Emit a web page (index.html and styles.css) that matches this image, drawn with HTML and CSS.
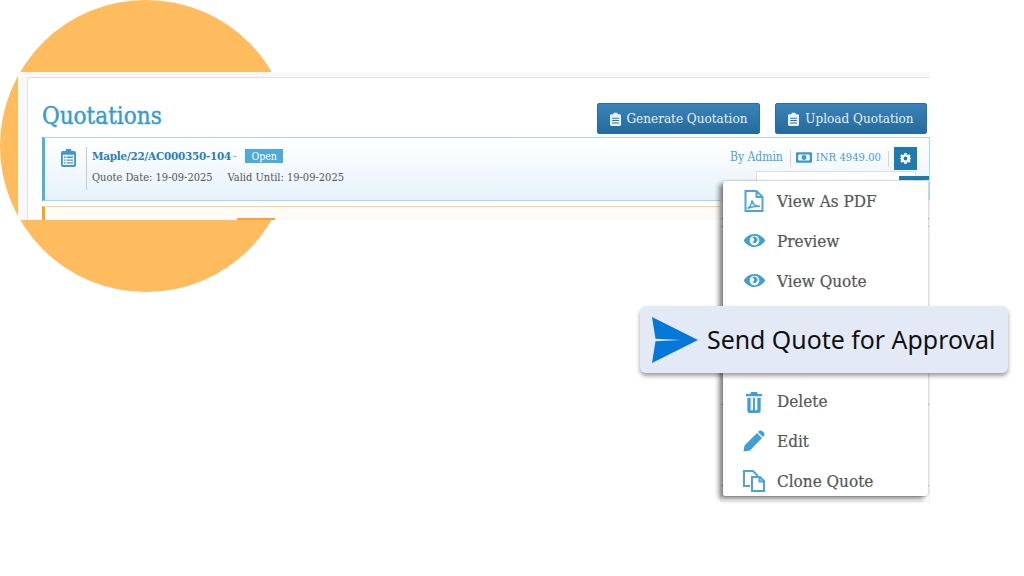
FILE: index.html
```html
<!DOCTYPE html>
<html lang="en">
<head>
  <meta charset="UTF-8">
  <meta name="viewport" content="width=device-width, initial-scale=1.0">
  <title>Quotations</title>
  <link rel="stylesheet" href="styles.css">
</head>
<body>
  <div class="canvas">
    <div class="circle"></div>

    <div class="sheet">
      <div class="panel">
        <div class="panel-head">
          <h1>Quotations</h1>
          <div class="head-actions">
            <button class="btn btn-generate">
              <svg class="btn-icon" viewBox="0 0 16 20"><path fill="#e8f1f8" fill-rule="evenodd" d="M2 3h3V2a1 1 0 0 1 1-1h4a1 1 0 0 1 1 1v1h3a2 2 0 0 1 2 2v13a2 2 0 0 1-2 2H2a2 2 0 0 1-2-2V5a2 2 0 0 1 2-2zm1 5v1.500h10V8zm0 3.500V13h10v-1.500zM3 15v1.500h10V15z"/></svg>
              Generate Quotation
            </button>
            <button class="btn btn-upload">
              <svg class="btn-icon" viewBox="0 0 16 20"><path fill="#e8f1f8" fill-rule="evenodd" d="M2 3h3V2a1 1 0 0 1 1-1h4a1 1 0 0 1 1 1v1h3a2 2 0 0 1 2 2v13a2 2 0 0 1-2 2H2a2 2 0 0 1-2-2V5a2 2 0 0 1 2-2zm1 5v1.500h10V8zm0 3.500V13h10v-1.500zM3 15v1.500h10V15z"/></svg>
              Upload Quotation
            </button>
          </div>
        </div>

        <div class="quote quote-open">
          <div class="quote-icon">
            <svg viewBox="0 0 16 20"><path fill="#3f97cc" fill-rule="evenodd" d="M2 3h3V2a1 1 0 0 1 1-1h4a1 1 0 0 1 1 1v1h3a2 2 0 0 1 2 2v13a2 2 0 0 1-2 2H2a2 2 0 0 1-2-2V5a2 2 0 0 1 2-2zm0 4v11h12V7zm1.200 2h1.600v1.400H3.200zm2.800 0h6.800v1.400H6zm-2.800 3h1.600v1.400H3.200zm2.800 0h6.800v1.400H6zm-2.800 3h1.600v1.400H3.200zm2.800 0h6.800v1.400H6z"/></svg>
          </div>
          <div class="quote-body">
            <div class="quote-title"><a>Maple/22/AC000350-104</a> <span class="dash">-</span> <span class="badge">Open</span></div>
            <div class="quote-dates"><span>Quote Date: 19-09-2025</span><span>Valid Until: 19-09-2025</span></div>
          </div>
          <div class="quote-meta">
            <span class="by">By Admin</span>
            <span class="amount">
              <svg viewBox="0 0 18 12"><path fill="#3f97cc" fill-rule="evenodd" d="M1 0h16a1 1 0 0 1 1 1v10a1 1 0 0 1-1 1H1a1 1 0 0 1-1-1V1a1 1 0 0 1 1-1zm2.500 2.500L2.500 3.500v5l1 1h11l1-1v-5l-1-1zM9 3.200a2.800 2.800 0 1 1 0 5.600 2.800 2.800 0 0 1 0-5.600z"/></svg>
              INR 4949.00
            </span>
            <span class="gear-btn">
              <svg viewBox="0 0 24 24"><path fill="#fff" fill-rule="evenodd" d="M10 2h4l.6 2.900 1.700.7 2.500-1.600 2.800 2.800-1.600 2.500.7 1.700L23.500 12l-2.800.9-.7 1.700 1.600 2.500-2.800 2.800-2.500-1.600-1.700.7L14 22h-4l-.6-2.900-1.700-.7-2.500 1.600-2.800-2.800 1.600-2.500-.7-1.700L.5 12l2.800-.9.7-1.700-1.600-2.500 2.800-2.800 2.500 1.600 1.700-.7zm2 6.500a3.500 3.500 0 1 0 0 7 3.500 3.500 0 0 0 0-7z"/></svg>
            </span>
          </div>
        </div>

        <div class="quote quote-pending">
          <span class="badge-orange"></span>
        </div>
      </div>
    </div>

    <div class="menu-back"></div>
    <div class="peek"></div>
    <div class="peek-bar"></div>

    <ul class="menu">
      <li>
        <svg class="icon-pdf" viewBox="0 0 20 22"><path fill="none" stroke="#4aa6d8" stroke-width="2" d="M1.500 1h11l6 6v14h-17zM12.500 1v6h6"/><path fill="none" stroke="#4aa6d8" stroke-width="1.500" d="M3.500 18.500c2.500-1.500 4-4.500 4.500-8 .8 3.500 3 5.800 8 5.800-4 0-8.500.2-12.500 2.200z"/></svg>
        View As PDF
      </li>
      <li>
        <svg class="icon-eye" viewBox="0 0 24 16"><path fill="#3f9fd6" fill-rule="evenodd" d="M12 1c5.500 0 9.500 3.500 11.500 7-2 3.500-6 7-11.500 7S2.500 11.500.500 8C2.500 4.500 6.500 1 12 1zm0 1.800a5.200 5.200 0 1 0 0 10.400 5.200 5.200 0 0 0 0-10.400zM9.500 5a3.300 3.300 0 1 1 0 4.600A2 2 0 0 0 9.500 5z"/></svg>
        Preview
      </li>
      <li>
        <svg class="icon-eye" viewBox="0 0 24 16"><path fill="#3f9fd6" fill-rule="evenodd" d="M12 1c5.500 0 9.500 3.500 11.500 7-2 3.500-6 7-11.500 7S2.500 11.500.500 8C2.500 4.500 6.500 1 12 1zm0 1.800a5.200 5.200 0 1 0 0 10.400 5.200 5.200 0 0 0 0-10.400zM9.500 5a3.300 3.300 0 1 1 0 4.600A2 2 0 0 0 9.500 5z"/></svg>
        View Quote
      </li>
      <li class="gap"></li>
      <li>
        <svg class="icon-trash" viewBox="0 0 18 22"><path fill="#3f9fd6" fill-rule="evenodd" d="M6 0h6l1 2h4.500v2.500H.500V2H5zM2 6h14v13a3 3 0 0 1-3 3H5a3 3 0 0 1-3-3zm3.500 0v13H8V6zm4.500 0v13h2.500V6z"/></svg>
        Delete
      </li>
      <li>
        <svg class="icon-edit" viewBox="0 0 22 22"><path fill="#3f9fd6" d="M14 3l5 5L7 20.500.500 21.500 1.500 15.500zM15.500 1.500a3 3 0 0 1 4.200 0l.8.800a3 3 0 0 1 0 4.200l-.5.500-5-5z"/></svg>
        Edit
      </li>
      <li>
        <svg class="icon-clone" viewBox="0 0 22 22"><path fill="none" stroke="#4aa6d8" stroke-width="2" d="M7 16H1V1h9l4 4v2M9 7h8l4 4v10H9zM16.500 7v4.500H21"/></svg>
        Clone Quote
      </li>
    </ul>

    <div class="callout">
      <svg viewBox="0 0 48 48"><path fill="#0477d8" d="M1 1l46 23L1 47l3.500-21.800L30 24 4.500 22.800z"/></svg>
      <span>Send Quote for Approval</span>
    </div>
  </div>
</body>
</html>
```

FILE: styles.css
```css
html, body {
  margin: 0;
  padding: 0;
  background: #fff;
}
.canvas {
  position: relative;
  width: 1024px;
  height: 576px;
  overflow: hidden;
  font-family: "DejaVu Serif Condensed", "DejaVu Serif", serif;
}
.circle {
  position: absolute;
  left: 0;
  top: 0;
  width: 292px;
  height: 292px;
  border-radius: 50%;
  background: #ffbc5e;
}
.sheet {
  position: absolute;
  left: 18px;
  top: 72px;
  width: 912px;
  height: 148px;
  overflow: hidden;
  background: #f8f8f8;
  padding: 5px 0 0 9px;
  box-sizing: border-box;
}
.panel {
  height: 100%;
  background: #fff;
  border-top: 1px solid #e2e2e2;
  border-left: 1px solid #e2e2e2;
  padding: 0 0 0 14px;
}
.panel-head {
  display: flex;
  justify-content: space-between;
  align-items: flex-end;
  box-sizing: border-box;
  height: 59px;
  padding: 0 3px 3px 0;
}
h1 {
  margin: 0 0 4px;
  font-size: 24px;
  font-weight: 400;
  -webkit-text-stroke: 0.4px #359ccf;
  color: #359ccf;
}
.head-actions {
  display: flex;
  gap: 15px;
}
.btn {
  display: flex;
  align-items: center;
  justify-content: center;
  gap: 6px;
  height: 31px;
  padding: 0;
  border: 1px solid #2a6ea0;
  border-radius: 2px;
  background: linear-gradient(#3a83b8, #256a9e);
  color: #e8f1f8;
  font-family: inherit;
  font-size: 13.400px;
}
.btn-generate {
  width: 163px;
}
.btn-upload {
  width: 152px;
}
.btn-icon {
  width: 11px;
  height: 14px;
}
.quote {
  display: flex;
  box-sizing: border-box;
  background: linear-gradient(#fff, #e6f2fb);
  border: 1px solid #a5d8f2;
  border-left: 3px solid #4fb0e0;
  height: 64px;
}
.quote-icon {
  display: flex;
  justify-content: center;
  box-sizing: border-box;
  width: 42px;
  height: 43px;
  margin-top: 9px;
  padding-left: 6px;
  border-right: 1px solid #c9c9c9;
  flex-shrink: 0;
}
.quote-icon svg {
  width: 15px;
  height: 19px;
  margin-top: 1px;
}
.quote-body {
  flex: 1;
  padding: 10px 0 0 5px;
}
.quote-title {
  display: flex;
  align-items: center;
  height: 16px;
  font-size: 11.600px;
  font-weight: 700;
  letter-spacing: -0.25px;
  color: #2b7fb3;
}
.dash {
  margin: 0 9px 0 2px;
  font-weight: 400;
  color: #4aa6d8;
}
.badge {
  padding: 0 6px;
  height: 14px;
  line-height: 14px;
  letter-spacing: 0;
  background: #4fa9dc;
  color: #fff;
  font-size: 10.500px;
  font-weight: 400;
}
.quote-dates {
  display: flex;
  gap: 15px;
  margin-top: 7px;
  font-size: 11px;
  color: #555;
}
.quote-meta {
  display: flex;
  align-items: center;
  align-self: flex-start;
  margin: 9px 12px 0 0;
  font-size: 11.200px;
  color: #4a9fd0;
}
.by {
  padding: 0 7px 3px 0;
  font-size: 12px;
  border-right: 1px solid #d5d5d5;
}
.amount {
  display: flex;
  align-items: center;
  gap: 4px;
  padding: 0 7px 3px 5px;
  border-right: 1px solid #d5d5d5;
}
.amount svg {
  width: 16px;
  height: 11px;
}
.gear-btn {
  display: flex;
  align-items: center;
  justify-content: center;
  width: 23px;
  height: 23px;
  margin-left: 5px;
  background: #1f7aad;
}
.gear-btn svg {
  width: 13px;
  height: 13px;
}
.quote-pending {
  display: block;
  position: relative;
  margin-top: 5px;
  background: #fffcf7;
  border: 1px solid #ffd197;
  border-left: 3px solid #f5a623;
}
.badge-orange {
  position: absolute;
  left: 192px;
  top: 11px;
  width: 38px;
  height: 14px;
  background: #f5a33a;
}
.menu-back {
  position: absolute;
  left: 720px;
  top: 200px;
  width: 210px;
  height: 302px;
  box-sizing: border-box;
  border: 1px solid #f0f0f0;
  background-color: #fff;
  background-repeat: no-repeat;
  background-size: 100% 1px;
  background-image:
    linear-gradient(#8ccbec, #8ccbec),
    linear-gradient(#f7b767, #f7b767),
    linear-gradient(#f7b767, #f7b767),
    linear-gradient(#f7b767, #f7b767);
  background-position: 0 17px, 0 25px, 0 203px, 0 284px;
}
.peek {
  position: absolute;
  left: 756px;
  top: 171px;
  width: 160px;
  height: 12px;
  background: #fff;
  border: 1px solid #ddd;
  box-sizing: border-box;
}
.peek-bar {
  position: absolute;
  left: 899px;
  top: 176px;
  width: 30px;
  height: 4px;
  background: #1f7aad;
}
.menu {
  position: absolute;
  left: 723px;
  top: 181px;
  width: 205px;
  height: 315px;
  margin: 0;
  padding: 0;
  list-style: none;
  overflow: hidden;
  background: #fff;
  border-radius: 2px;
  box-shadow: -4px 3px 5px rgba(0, 0, 0, 0.45), 0 0 2px rgba(0, 0, 0, 0.4);
  color: #555;
  font-size: 17px;
  -webkit-text-stroke: 0.2px #555;
}
.menu li {
  display: flex;
  align-items: center;
  height: 40px;
  padding-left: 54px;
  position: relative;
}
.menu li.gap {
  height: 80px;
}
.menu li svg {
  position: absolute;
}
.icon-pdf {
  left: 21px;
  top: 9px;
  width: 20px;
  height: 22px;
}
.icon-eye {
  left: 20px;
  top: 12px;
  width: 23px;
  height: 15px;
}
.icon-trash {
  left: 22px;
  top: 11px;
  width: 18px;
  height: 21px;
}
.icon-edit {
  left: 20px;
  top: 9px;
  width: 22px;
  height: 22px;
}
.icon-clone {
  left: 20px;
  top: 9px;
  width: 22px;
  height: 22px;
}
.callout {
  position: absolute;
  left: 640px;
  top: 306px;
  width: 368px;
  height: 67px;
  display: flex;
  align-items: center;
  gap: 8px;
  padding-left: 11px;
  box-sizing: border-box;
  background: #e4eaf5;
  border-radius: 6px;
  box-shadow: 0 3px 4px rgba(0, 0, 0, 0.38);
  color: #111;
  font-family: "Noto Sans", sans-serif;
  font-size: 24.900px;
}
.callout span {
  padding-bottom: 2px;
}
.callout svg {
  width: 48px;
  height: 48px;
}
```
